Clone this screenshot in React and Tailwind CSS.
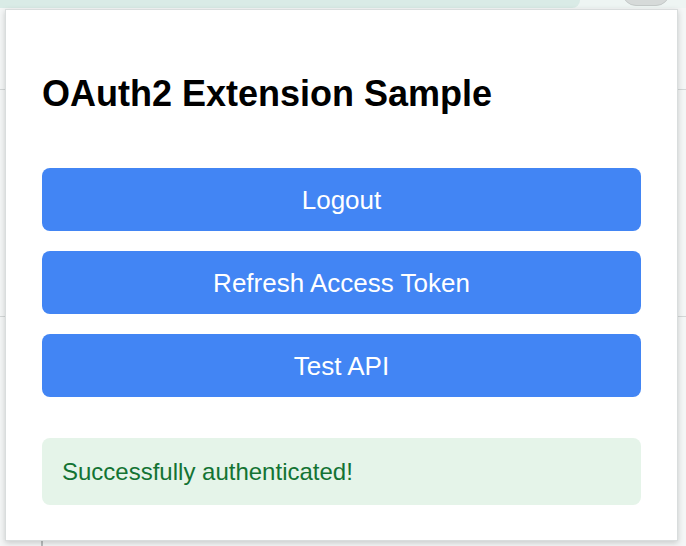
export default function App() {
  return (
    <div
      className="relative w-[686px] h-[546px] overflow-hidden bg-[#f4f6f6]"
      style={{ fontFamily: '"Liberation Sans", Arial, sans-serif' }}
    >
      {/* browser chrome behind the popup */}
      <div className="absolute left-0 top-0 w-[686px] h-[8px] bg-[#eef5f3]" />
      <div className="absolute left-0 top-0 w-[580px] h-[8px] bg-[#d9ebe6] rounded-br-[8px]" />
      <div className="absolute left-[622px] top-[-22px] w-[48px] h-[28px] rounded-full bg-[#d6dad9] border border-[#c4c9c8]" />
      <div className="absolute left-0 top-[89px] w-[686px] h-[1px] bg-[#d3d7d7]" />
      <div className="absolute left-0 top-[316px] w-[686px] h-[1px] bg-[#d3d7d7]" />
      <div className="absolute left-[41px] top-[530px] w-[2px] h-[20px] bg-[#b9bdbd]" />

      {/* popup */}
      <div className="relative ml-[5px] mt-[9px] w-[673px] h-[532px] bg-white border border-[#d9dddd] shadow-[0_2px_6px_rgba(0,0,0,0.18)] px-[36px] pt-[63px]">
        <h1 className="text-[36px] leading-[41px] font-bold text-black">OAuth2 Extension Sample</h1>
        <div className="mt-[54px] flex flex-col gap-[20px]">
          <button className="h-[63px] w-full rounded-[8px] bg-[#4285f4] text-white text-[26px] leading-none">Logout</button>
          <button className="h-[63px] w-full rounded-[8px] bg-[#4285f4] text-white text-[26px] leading-none">Refresh Access Token</button>
          <button className="h-[63px] w-full rounded-[8px] bg-[#4285f4] text-white text-[26px] leading-none">Test API</button>
        </div>
        <div className="mt-[41px] h-[67px] rounded-[8px] bg-[#e5f4e9] px-[20px] flex items-center text-[24px] text-[#137333]">
          Successfully authenticated!
        </div>
      </div>
    </div>
  );
}
